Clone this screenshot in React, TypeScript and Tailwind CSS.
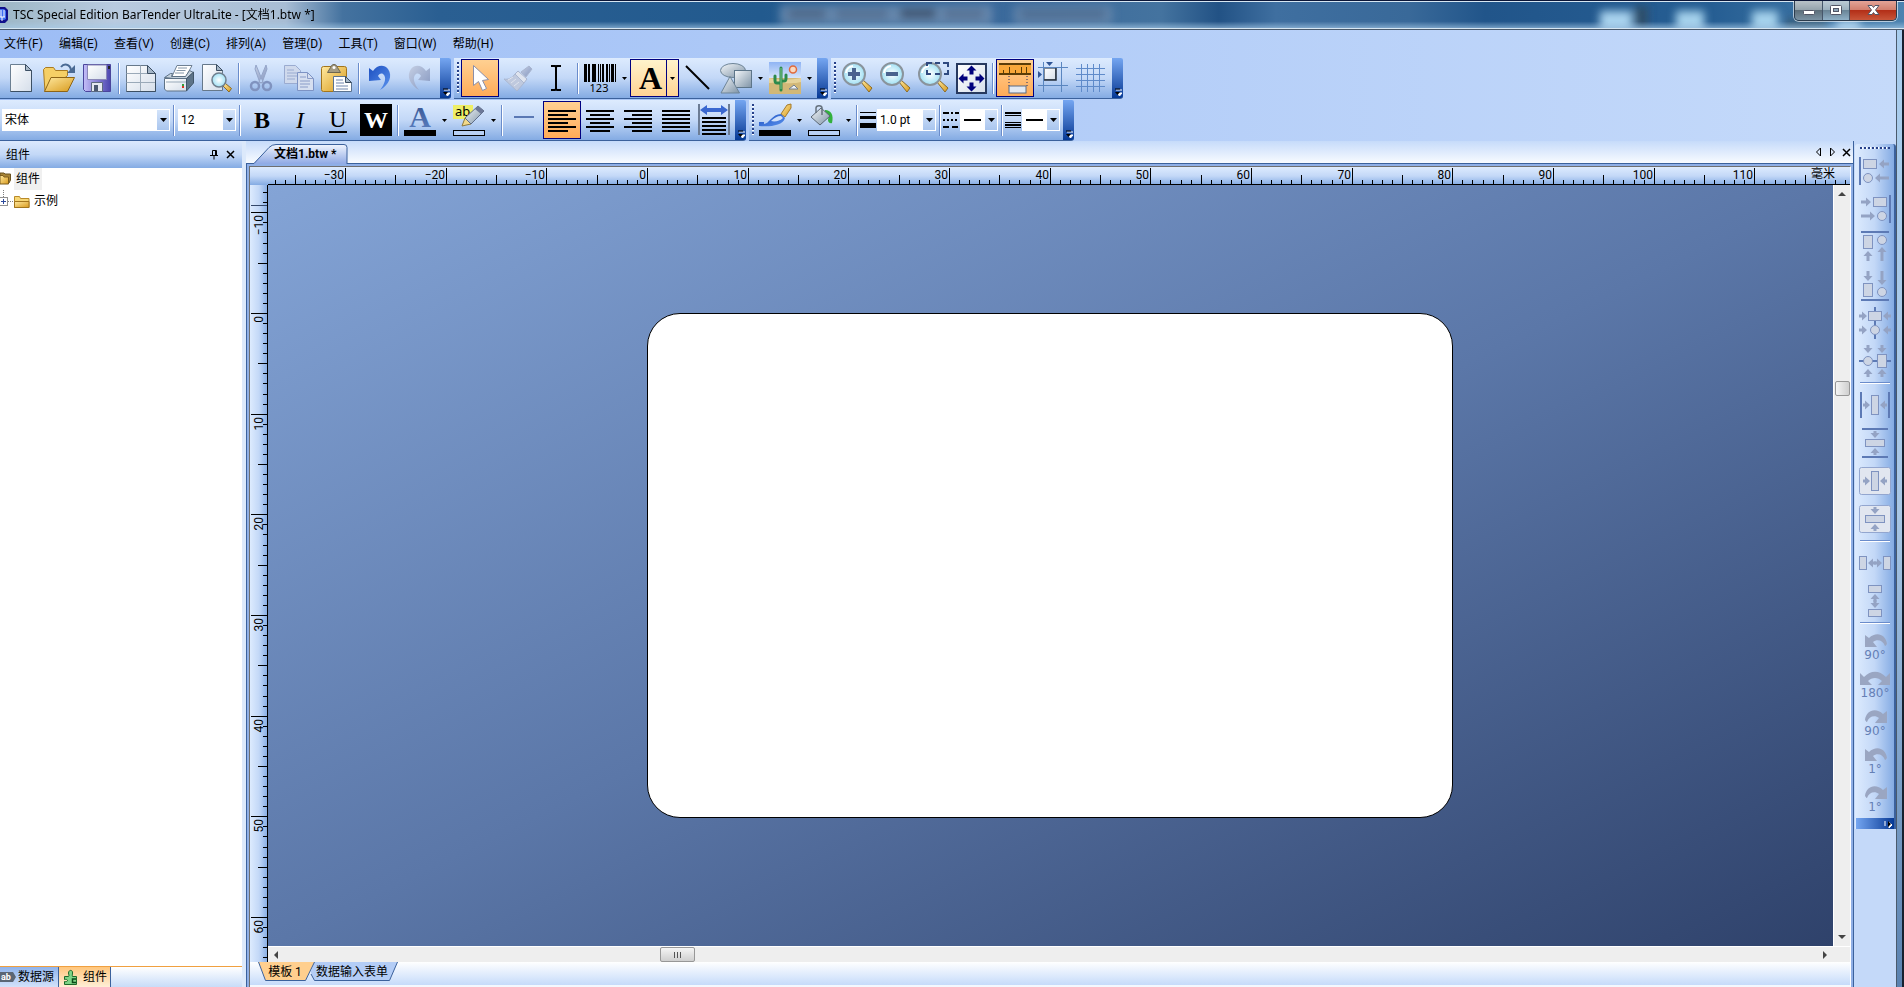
import React from "react";

const MM = 10.067;

const menuItems = [
  "文件(F)",
  "编辑(E)",
  "查看(V)",
  "创建(C)",
  "排列(A)",
  "管理(D)",
  "工具(T)",
  "窗口(W)",
  "帮助(H)",
];

/* ---------- shared pieces ---------- */

const Icon: React.FC<{ children: React.ReactNode }> = ({ children }) => (
  <svg
    className="block h-8 w-8 shrink-0 overflow-visible"
    viewBox="0 0 32 32"
    fill="none"
    aria-hidden="true"
  >
    {children}
  </svg>
);

const SharedGradients = () => (
  <svg className="absolute h-0 w-0" aria-hidden="true">
    <defs>
      <linearGradient id="page" x1="0" y1="0" x2="1" y2="1">
        <stop offset="0" stopColor="#ffffff" />
        <stop offset="1" stopColor="#d5deea" />
      </linearGradient>
      <linearGradient id="gold" x1="0" y1="0" x2="1" y2="1">
        <stop offset="0" stopColor="#ffe9a0" />
        <stop offset="1" stopColor="#d89a1c" />
      </linearGradient>
      <linearGradient id="violet" x1="0" y1="0" x2="1" y2="0">
        <stop offset="0" stopColor="#c3bdf8" />
        <stop offset="1" stopColor="#4b45b0" />
      </linearGradient>
      <linearGradient id="steel" x1="0" y1="0" x2="1" y2="1">
        <stop offset="0" stopColor="#f4f7fa" />
        <stop offset="1" stopColor="#7e93a6" />
      </linearGradient>
      <linearGradient id="blue" x1="0" y1="0" x2="1" y2="1">
        <stop offset="0" stopColor="#1c4fc0" />
        <stop offset="1" stopColor="#5b93ee" />
      </linearGradient>
      <linearGradient id="faded" x1="0" y1="0" x2="1" y2="1">
        <stop offset="0" stopColor="#c5cfe4" />
        <stop offset="1" stopColor="#8496bf" />
      </linearGradient>
      <linearGradient id="letter" x1="0" y1="0" x2="0" y2="1">
        <stop offset="0" stopColor="#33508c" />
        <stop offset="1" stopColor="#5d82c4" />
      </linearGradient>
      <radialGradient id="lens">
        <stop offset="0" stopColor="#ffffff" />
        <stop offset="1" stopColor="#9fe0f4" />
      </radialGradient>
      <linearGradient id="sky" x1="0" y1="0" x2="0" y2="1">
        <stop offset="0" stopColor="#8fb4f4" />
        <stop offset="1" stopColor="#dbe8fb" />
      </linearGradient>
    </defs>
  </svg>
);

const Caret = () => (
  <svg className="block h-1 w-[7px]" viewBox="0 0 7 4" aria-hidden="true">
    <path d="M0 0h7L3.5 4z" fill="#000" />
  </svg>
);

const Separator = () => (
  <div className="flex h-[31px] w-[6px] shrink-0 justify-center">
    <div className="w-[2px] border-l border-[#6a8ccb] bg-white" />
  </div>
);

const Grip = () => (
  <div className="flex h-8 w-[7px] shrink-0 justify-center">
    <div className="w-[2px] bg-[repeating-linear-gradient(180deg,#27418a_0px,#27418a_2px,#ffffff_2px,#ffffff_3px,transparent_3px,transparent_4px)]" />
  </div>
);

const ToolButton: React.FC<{
  label: string;
  active?: boolean;
  disabled?: boolean;
  children: React.ReactNode;
}> = ({ label, active, disabled, children }) => (
  <button
    type="button"
    aria-label={label}
    title={label}
    disabled={disabled}
    className={`flex h-[38px] w-[38px] shrink-0 items-center justify-center ${
      active
        ? "border border-[#000080] bg-linear-to-b from-[#ffd091] to-[#ffab57]"
        : ""
    }`}
  >
    {children}
  </button>
);

const SplitButton: React.FC<{
  label: string;
  hot?: boolean;
  children: React.ReactNode;
}> = ({ label, hot, children }) => (
  <div
    className={`flex h-[38px] w-[49px] shrink-0 ${
      hot
        ? "border border-[#000080] bg-linear-to-b from-[#fff3cb] to-[#ffd394]"
        : ""
    }`}
  >
    <button
      type="button"
      aria-label={label}
      title={label}
      className="flex flex-1 items-center justify-center"
    >
      {children}
    </button>
    <button
      type="button"
      aria-label={`${label} ▾`}
      className={`flex w-[12px] items-center justify-center ${
        hot ? "border-l border-[#000080]" : ""
      }`}
    >
      <svg className="block h-[3px] w-[5px]" viewBox="0 0 5 3">
        <path d="M0 0h5L2.5 3z" fill="#000" />
      </svg>
    </button>
  </div>
);

const Toolbar: React.FC<{ label: string; children: React.ReactNode }> = ({
  label,
  children,
}) => (
  <div
    role="toolbar"
    aria-label={label}
    className="flex h-[41px] shrink-0 rounded-r-[3px] border-b border-[#3b619c] bg-linear-to-b from-[#ddebfe] via-[#c3d8f7] to-[#84abe3]"
  >
    <div className="flex items-center pr-[2px]">{children}</div>
    <button
      type="button"
      aria-label="工具栏选项"
      className="flex w-[11px] items-end justify-center rounded-r-[2px] bg-linear-to-b from-[#75a6f1] to-[#053995] pb-[2px]"
    >
      <svg className="block h-[8px] w-[8px]" viewBox="0 0 8 8">
        <path d="M2 2h6M3 5h5L5.5 8z" stroke="#fff" fill="#fff" />
        <path d="M1 1h5" stroke="#000" />
        <path d="M1 4h5L3.5 7z" fill="#000" />
      </svg>
    </button>
  </div>
);

const ComboBox: React.FC<{
  label: string;
  value: string;
  width: string;
  line?: boolean;
}> = ({ label, value, width, line }) => (
  <div
    className={`relative mx-px flex h-[22px] shrink-0 border border-white bg-white ${width}`}
  >
    <select
      aria-label={label}
      defaultValue={value}
      className="min-w-0 flex-1 appearance-none bg-white pl-[2px] text-[12px] leading-[20px] text-black outline-none"
    >
      <option value={value}>{line ? "" : value}</option>
    </select>
    {line && (
      <span className="pointer-events-none absolute top-[9px] left-[3px] h-[2px] w-[17px] bg-black" />
    )}
    <span className="pointer-events-none flex w-[12px] items-center justify-center bg-linear-to-b from-[#d3e3fa] to-[#a9c5ee]">
      <Caret />
    </span>
  </div>
);

const Magnifier: React.FC<{ children?: React.ReactNode }> = ({ children }) => (
  <Icon>
    <path d="M20 20l2-2 9 8-3 4z" fill="url(#gold)" stroke="#8a6a26" />
    <circle cx="13" cy="12" r="11" fill="url(#lens)" stroke="#8a949c" strokeWidth="2" />
    <path d="M5 11a8 8 0 0 1 7-7" stroke="#fff" strokeWidth="2" />
    {children}
  </Icon>
);

/* ---------- title bar ---------- */

const TitleBar = () => (
  <header className="relative flex h-[30px] shrink-0 items-start justify-between overflow-hidden border-t border-[#0b1638] bg-[linear-gradient(90deg,#9db7c6_0%,#b9cbe0_6%,#a8bdd4_15%,#44729f_18%,#2a5f92_23%,#225a8e_40%,#3a699b_52%,#44739f_61%,#225285_64%,#3f6fa0_67%,#396999_74%,#21558a_78%,#265e93_90%,#4c83b0_100%)]">
    <svg className="absolute inset-0 h-full w-full" aria-hidden="true">
      <defs>
        <filter id="soft" x="-50%" y="-50%" width="200%" height="200%">
          <feGaussianBlur stdDeviation="4" />
        </filter>
        <linearGradient id="glow" x1="0" y1="0" x2="0" y2="1">
          <stop offset="0.7" stopColor="#a8cbe8" stopOpacity="0" />
          <stop offset="1" stopColor="#a8cbe8" stopOpacity="0.8" />
        </linearGradient>
      </defs>
      <g filter="url(#soft)">
        <rect x="780" y="4" width="212" height="20" fill="#7391b4" opacity="0.8" />
        <rect x="1014" y="5" width="98" height="18" fill="#7391b4" opacity="0.7" />
        <rect x="788" y="9" width="38" height="8" fill="#3c506e" opacity="0.7" />
        <rect x="836" y="9" width="52" height="8" fill="#3c506e" opacity="0.5" />
        <rect x="900" y="8" width="36" height="9" fill="#2c3c58" opacity="0.8" />
        <rect x="944" y="9" width="40" height="8" fill="#3c506e" opacity="0.5" />
        <rect x="1020" y="9" width="86" height="8" fill="#3c5a80" opacity="0.7" />
        <rect x="1600" y="10" width="32" height="20" fill="#a9d3ee" />
        <rect x="1634" y="5" width="14" height="22" fill="#34495a" opacity="0.7" />
        <rect x="1676" y="10" width="28" height="20" fill="#a5d2ec" />
        <rect x="1752" y="10" width="26" height="20" fill="#a5d2ec" />
        <rect x="1786" y="18" width="40" height="12" fill="#3d5766" opacity="0.7" />
        <rect x="1836" y="20" width="24" height="12" fill="#b5d8f2" />
      </g>
      <rect width="100%" height="100%" fill="url(#glow)" />
      <path d="M0 .5h3000M0 27.5h3000" stroke="#d6e6f2" />
      <path d="M0 28.5h3000" stroke="#4a5a6c" />
    </svg>
    <div className="relative flex items-center pt-1">
      <svg className="h-4 w-2" viewBox="0 0 8 16" aria-hidden="true">
        <path d="M0 0h5l3 3v10l-3 3H0z" fill="#10108c" />
        <path d="M0 2h4l2 2v8l-2 1H0z" fill="#3d6cf0" />
        <path d="M1 3v7M4 3v7M0 10h5M2 10v4" stroke="#fff" />
      </svg>
      <h1 className="pl-[5px] font-['Noto_Sans','Noto_Sans_CJK_SC',sans-serif] text-[12px] leading-5 whitespace-pre text-black">
        TSC Special Edition BarTender UltraLite - [文档1.btw *]
      </h1>
    </div>
    <div className="relative mr-[7px] flex h-5 overflow-hidden rounded-b-[5px] border border-t-0 border-[#2b3b4c] shadow-[0_0_0_1px_rgba(255,255,255,0.6)]">
      <button
        type="button"
        aria-label="最小化"
        className="flex w-[28px] items-center justify-center border-r border-[#46566a] bg-[linear-gradient(180deg,#b9c2c8_0%,#96a4ad_45%,#5c6e7a_50%,#7b92a3_100%)]"
      >
        <svg className="h-5 w-5" viewBox="0 0 20 20">
          <rect x="4.5" y="9.5" width="11" height="4" rx="1" fill="#fff" stroke="#535666" />
        </svg>
      </button>
      <button
        type="button"
        aria-label="最大化"
        className="flex w-[27px] items-center justify-center border-r border-[#46566a] bg-[linear-gradient(180deg,#bccad4_0%,#9db1bf_45%,#6a8597_50%,#8fb0c6_100%)]"
      >
        <svg className="h-5 w-5" viewBox="0 0 20 20">
          <rect x="4.5" y="4.5" width="11" height="9" rx="1" fill="#fff" stroke="#535666" />
          <rect x="7.5" y="7.5" width="5" height="3" fill="#8da5b8" stroke="#535666" />
        </svg>
      </button>
      <button
        type="button"
        aria-label="关闭"
        className="flex w-[46px] items-center justify-center bg-[linear-gradient(180deg,#e3a497_0%,#d3806f_45%,#b32f18_50%,#c8563a_100%)]"
      >
        <svg className="h-5 w-5" viewBox="0 0 20 20">
          <path
            d="M5 4.5h4l1.5 2 1.5-2h4l-3.5 4.5 3.5 4.5h-4l-1.5-2-1.5 2H5L8.5 9z"
            fill="#fff"
            stroke="#535666"
          />
        </svg>
      </button>
    </div>
  </header>
);

/* ---------- toolbars ---------- */

const StandardToolbar = () => (
  <Toolbar label="标准">
    <div className="w-[2px]" />
    <ToolButton label="新建">
      <Icon>
        <path d="M5.5 2.5h15l6 6v21h-21z" fill="url(#page)" stroke="#6b7f92" />
        <path d="M5.5 29.5h21v-21" stroke="#3c4f63" />
        <path d="M20.5 2.5v6h6z" fill="#a9b9c9" stroke="#3c4f63" />
      </Icon>
    </ToolButton>
    <ToolButton label="打开">
      <Icon>
        <path d="M.5 7.5l2-2h8l2 3h12v5l-18 16H2z" fill="#f5cf66" stroke="#a97b22" />
        <path d="M8 15.5h23.5l-7 14H1.5z" fill="url(#gold)" stroke="#8d6416" />
        <path d="M18 5c3-4 9-3 10 3" stroke="#4a6a94" strokeWidth="2" />
        <path d="M32 3v8h-8z" fill="#4a6a94" />
      </Icon>
    </ToolButton>
    <ToolButton label="保存">
      <Icon>
        <path d="M2.5 2.5h27v27h-25l-2-2z" fill="url(#violet)" stroke="#4a459c" />
        <path d="M6.5 3h19v14.5h-19z" fill="url(#page)" stroke="#8a88b8" />
        <path d="M10.5 20.5h11v9h-11z" fill="#e4e8ef" stroke="#5c6a80" />
        <path d="M13 23h4v6h-4z" fill="#4b5870" />
        <path d="M27 4h2v3h-2z" fill="#222" />
      </Icon>
    </ToolButton>
    <Separator />
    <ToolButton label="页面设置">
      <Icon>
        <path d="M1.5 3.5h21l8 8v18h-29z" fill="url(#page)" stroke="#66788a" />
        <path d="M1.5 11.5h21M1.5 20.5h29M15.5 3.5v26" stroke="#9aa9b8" />
        <path d="M1.5 29.5h29v-18" stroke="#3c4f63" />
        <path d="M22.5 3.5v8h8z" fill="#a5b6c7" stroke="#3c4f63" />
      </Icon>
    </ToolButton>
    <ToolButton label="打印">
      <Icon>
        <path d="M14 3.5h15l-6 11H9z" fill="#fff" stroke="#6e8093" />
        <path d="M15 6h9M13.5 8.5h9M12 11h9" stroke="#8496a8" />
        <path d="M1.5 15.5l6-4h2l-1 3h14l4-6 4 2-6 7.5z" fill="#c5d2de" stroke="#5e7286" />
        <path d="M1.5 16.5h22v12.5h-20l-2-2z" fill="url(#page)" stroke="#5e7286" />
        <path d="M23.5 16.5l7-6.5v11l-7 8z" fill="#5d7388" stroke="#41566a" />
        <path d="M3 20h20" stroke="#97a8b8" />
        <path d="M19 22h2v2h-2z" fill="#2f9d3a" />
        <path d="M19 24h2v2h-2z" fill="#d83222" />
      </Icon>
    </ToolButton>
    <ToolButton label="打印预览">
      <Icon>
        <path d="M1.5 2.5h14l6 6v20h-20z" fill="url(#page)" stroke="#66788a" />
        <path d="M15.5 2.5v6h6z" fill="#a5b6c7" stroke="#3c4f63" />
        <path d="M22 24l2.5-2.5 6 5-2.5 3.5z" fill="url(#gold)" stroke="#8a6a26" />
        <circle cx="18" cy="18" r="7" fill="url(#lens)" stroke="#6f7f8e" strokeWidth="1.5" />
      </Icon>
    </ToolButton>
    <Separator />
    <ToolButton label="剪切" disabled>
      <Icon>
        <path d="M11 3l7 17-3 1-5-14zM21 3l-7 17 3 1 5-14z" fill="url(#faded)" stroke="#94a5c9" />
        <circle cx="10" cy="24" r="4" stroke="#8093bf" strokeWidth="2.5" />
        <circle cx="22" cy="24" r="4" stroke="#8093bf" strokeWidth="2.5" />
      </Icon>
    </ToolButton>
    <ToolButton label="复制" disabled>
      <Icon>
        <path d="M1.5 3.5h11l5 5v13h-16z" fill="#cfd9ec" stroke="#9aabd0" />
        <path d="M4 8h7M4 11h10M4 14h10M4 17h8" stroke="#9aabd0" />
        <path d="M14.5 10.5h10l6 6v12h-16z" fill="#d6dff0" stroke="#7d93c4" />
        <path d="M24.5 10.5v6h6M17 15h6M17 19h10M17 22h10M17 25h8" stroke="#8a9cc8" />
      </Icon>
    </ToolButton>
    <ToolButton label="粘贴">
      <Icon>
        <rect x=".5" y="4.5" width="25" height="25" rx="2" fill="url(#gold)" stroke="#a2751c" />
        <path d="M6.5 10.5l3-5c1-4 6-4 7 0l3 5z" fill="#a59c82" stroke="#6d6650" />
        <circle cx="13" cy="5.5" r="1.5" fill="#fff" />
        <path d="M12.5 14.5h12l6 6v9h-18z" fill="#fff" stroke="#5b7390" />
        <path d="M24.5 14.5v6h6z" fill="#a5b6c7" stroke="#3c4f63" />
        <path d="M15 18h7M15 21h8M15 24h12M15 27h12" stroke="#7187ae" />
      </Icon>
    </ToolButton>
    <Separator />
    <ToolButton label="撤消">
      <Icon>
        <path
          d="M4 6l4 3c4-6 11-7 15-2 5 7 1 16-8 21 5-6 7-13 3-16-2-1-4 0-5 2l3 4-12 1z"
          fill="url(#blue)"
        />
      </Icon>
    </ToolButton>
    <ToolButton label="恢复" disabled>
      <Icon>
        <path
          d="M27 6l-4 3c-4-6-11-7-15-2-5 7-1 16 8 21-5-6-7-13-3-16 2-1 4 0 5 2l-3 4 12 1z"
          fill="url(#faded)"
        />
      </Icon>
    </ToolButton>
  </Toolbar>
);

const ObjectToolbar = () => (
  <Toolbar label="对象">
    <Grip />
    <ToolButton label="选择" active>
      <Icon>
        <path
          d="M9.5 3.5v20l5-4 4 9 4-2-4-8 6-1z"
          fill="#fff"
          stroke="#8c8fa8"
        />
      </Icon>
    </ToolButton>
    <ToolButton label="格式刷" disabled>
      <Icon>
        <path d="M27 4l3 3-6 8-5-5z" fill="url(#faded)" stroke="#a9b5cf" />
        <path d="M16 9l9 8-3 4-9-9z" fill="#dfe4ee" stroke="#a9b5cf" />
        <path d="M13 12l9 9-7 8L2 17c4 1 8-1 11-5z" fill="#bfc9de" stroke="#aab7d0" />
        <path d="M6 18l5-3M9 21l5-4M12 24l5-4" stroke="#dfe4ee" />
      </Icon>
    </ToolButton>
    <ToolButton label="文本光标">
      <Icon>
        <path d="M11 4h4l1 1 1-1h4M11 28h4l1-1 1 1h4M16 5v22" stroke="#000" strokeWidth="2" />
      </Icon>
    </ToolButton>
    <Separator />
    <SplitButton label="条形码">
      <Icon>
        <path
          d="M0 2h3v18H0zM4 2h2v18H4zM8 2h4v18H8zM14 2h1v18h-1zM16 2h1v18h-1zM18 2h2v18h-2zM22 2h2v18h-2zM25 2h1v18h-1zM27 2h3v18h-3zM31 2h1v18h-1z"
          fill="#000"
        />
        <text
          x="15"
          y="30"
          textAnchor="middle"
          fontSize="11"
          fill="#000"
          className="font-['Noto_Sans',sans-serif]"
        >
          123
        </text>
      </Icon>
    </SplitButton>
    <SplitButton label="文本" hot>
      <span className="pl-1 font-['Liberation_Serif',serif] text-[32px] leading-8 font-bold">
        A
      </span>
    </SplitButton>
    <ToolButton label="线条">
      <Icon>
        <path d="M4 4l23 23" stroke="#000" strokeWidth="2" />
      </Icon>
    </ToolButton>
    <SplitButton label="形状">
      <Icon>
        <ellipse cx="13" cy="8.5" rx="12.5" ry="7" fill="url(#steel)" stroke="#6d8497" />
        <rect x="14.5" y="8.5" width="17" height="17" fill="url(#steel)" stroke="#5d7589" />
        <path d="M10 14.5L19.5 31H1z" fill="url(#steel)" stroke="#6d8497" />
      </Icon>
    </SplitButton>
    <SplitButton label="图片">
      <Icon>
        <path d="M0 0h32v17H0z" fill="url(#sky)" />
        <path d="M0 16h32v16H0z" fill="#d2b877" />
        <path d="M0 16c10 2 22 2 32 0v4c-12 3-20-1-32 1z" fill="#e6d39a" />
        <circle cx="24" cy="7.5" r="3.5" fill="#f8d8c0" stroke="#e06a3c" strokeWidth="1.5" />
        <path
          d="M12 28V6M12 21H8c-2 0-2-1-2-3v-4M12 19h3c2 0 2-1 2-3v-3"
          stroke="#2c8a4c"
          strokeWidth="3"
          strokeLinecap="round"
        />
        <path d="M12 27V6" stroke="#7cc58c" />
        <path d="M20 27l5-4 4 4z" fill="#eef2f6" stroke="#74808c" />
      </Icon>
    </SplitButton>
  </Toolbar>
);

const ViewToolbar = () => (
  <Toolbar label="视图">
    <Grip />
    <ToolButton label="放大">
      <Magnifier>
        <path d="M7 12h12M13 6v12" stroke="#4a638e" strokeWidth="4" />
      </Magnifier>
    </ToolButton>
    <ToolButton label="缩小">
      <Magnifier>
        <path d="M7 12h12" stroke="#4a638e" strokeWidth="4" />
      </Magnifier>
    </ToolButton>
    <ToolButton label="缩放到选定内容">
      <Magnifier>
        <path
          d="M10 4V1h5M18 1h5M26 1h5v4M31 8v4h-4M23 12h-5M14 12h-4V8"
          stroke="#2f4a80"
          strokeWidth="2"
        />
      </Magnifier>
    </ToolButton>
    <ToolButton label="适合窗口">
      <Icon>
        <rect x="2" y="2" width="29" height="29" fill="url(#page)" stroke="#27395f" strokeWidth="2" />
        <path
          d="M16.5 3.500l5 5h-3v4h-4v-4h-3zM16.5 29.5l5-5h-3v-4h-4v4h-3zM3.5 16.500l5-5v3h4v4h-4v3zM29.500 16.500l-5-5v3h-4v4h4v3z"
          fill="#00007c"
        />
      </Icon>
    </ToolButton>
    <Separator />
    <ToolButton label="标尺" active>
      <Icon>
        <path d="M0 1h32v12H0z" fill="#f9a83a" />
        <path d="M0 2h32M0 12h32" stroke="#5b3d08" strokeWidth="2" />
        <path d="M4.5 8v3M10.5 5v6M16.5 8v3M22.5 5v6M27.5 5v6" stroke="#5b3d08" />
        <path d="M10 14v10M28 14v10" stroke="#1a2a6a" strokeDasharray="1 2" />
        <rect x="10" y="24" width="17" height="7" fill="#e3e9f2" stroke="#5a6b84" />
      </Icon>
    </ToolButton>
    <ToolButton label="对齐网格">
      <Icon>
        <path d="M1 5.5h30M1 23.5h30M6.5 0v30M24.5 0v30" stroke="#5a86c0" />
        <rect x="7.5" y="6.5" width="11" height="11" fill="url(#page)" stroke="#7d8896" />
        <path d="M7 18h12V6" stroke="#222c3a" strokeWidth="1.5" />
        <path d="M9 0h7l-3.5 4zM1 9v7l4-3.5z" fill="#2f5596" />
      </Icon>
    </ToolButton>
    <ToolButton label="网格">
      <Icon>
        <path
          d="M1 6.5h29M1 12.5h29M1 18.5h29M1 24.5h29M6.5 2v28M12.5 2v28M18.5 2v28M24.5 2v28"
          stroke="#5f8bca"
        />
      </Icon>
    </ToolButton>
  </Toolbar>
);

const lineSets: Record<string, string> = {
  left: "M2 7h28M2 11h20M2 15h28M2 19h20M2 23h28M2 27h20",
  center: "M2 7h28M6 11h20M2 15h28M6 19h20M2 23h28M6 27h20",
  right: "M2 7h28M10 11h20M2 15h28M10 19h20M2 23h28M10 27h20",
  justify: "M2 7h28M2 11h28M2 15h28M2 19h28M2 23h28M2 27h28",
};

const AlignIcon: React.FC<{ kind: string }> = ({ kind }) => (
  <Icon>
    <path d={lineSets[kind]} stroke="#000" strokeWidth="2" />
  </Icon>
);

const TextToolbar = () => (
  <Toolbar label="文本格式">
    <div className="w-px" />
    <ComboBox label="字体" value="宋体" width="w-[168px]" />
    <Separator />
    <ComboBox label="字号" value="12" width="w-[58px]" />
    <Separator />
    <ToolButton label="粗体">
      <span className="font-['Liberation_Serif',serif] text-[24px] leading-8 font-bold">B</span>
    </ToolButton>
    <ToolButton label="斜体">
      <span className="font-['Liberation_Serif',serif] text-[24px] leading-8 italic">I</span>
    </ToolButton>
    <ToolButton label="下划线">
      <span className="border-b-2 border-black font-['Liberation_Serif',serif] text-[24px] leading-6">
        U
      </span>
    </ToolButton>
    <ToolButton label="反白">
      <span className="flex h-8 w-8 items-center justify-center bg-black font-['Liberation_Serif',serif] text-[24px] leading-8 font-bold text-white">
        W
      </span>
    </ToolButton>
    <Separator />
    <SplitButton label="文本颜色">
      <Icon>
        <text
          x="16"
          y="23"
          textAnchor="middle"
          fontSize="30"
          fontWeight="700"
          fill="url(#letter)"
          className="font-['Liberation_Serif',serif]"
        >
          A
        </text>
        <path d="M0 26h32v6H0z" fill="#000" />
      </Icon>
    </SplitButton>
    <SplitButton label="背景色">
      <Icon>
        <path d="M0 1h20v14H0z" fill="#eeee66" />
        <text
          x="2"
          y="12"
          fontSize="13"
          fill="#000"
          className="font-['Noto_Sans',sans-serif]"
        >
          ab
        </text>
        <path d="M9 22l3-8 6 6z" fill="#f2d98a" stroke="#8e7a3c" />
        <path d="M12 14L25 2l6 5-13 13z" fill="url(#steel)" stroke="#5f6d88" />
        <path d="M25 2l6 5-3 3-6-5z" fill="#6c7898" />
        <rect x=".5" y="26.5" width="31" height="5" fill="#b8d0f4" stroke="#000" />
      </Icon>
    </SplitButton>
    <Separator />
    <ToolButton label="项目">
      <Icon>
        <path d="M6 13h20" stroke="#5a78b4" strokeWidth="2" />
      </Icon>
    </ToolButton>
    <ToolButton label="左对齐" active>
      <AlignIcon kind="left" />
    </ToolButton>
    <ToolButton label="居中">
      <AlignIcon kind="center" />
    </ToolButton>
    <ToolButton label="右对齐">
      <AlignIcon kind="right" />
    </ToolButton>
    <ToolButton label="两端对齐">
      <AlignIcon kind="justify" />
    </ToolButton>
    <ToolButton label="调整宽度">
      <Icon>
        <path d="M1 0v31M31 0v31" stroke="#6c7c94" strokeWidth="2" />
        <path d="M2 6l7-5v3h14V1l7 5-7 5V8H9v3z" fill="#3a68d0" />
        <path d="M4 14h24M4 18h24M4 22h24M4 26h24M4 30h24" stroke="#000" strokeWidth="2" />
      </Icon>
    </ToolButton>
  </Toolbar>
);

const LineToolbar = () => (
  <Toolbar label="线条与填充">
    <Grip />
    <SplitButton label="线条颜色">
      <Icon>
        <path d="M22 10l6-9 4-1v4l-6 9z" fill="url(#gold)" stroke="#a57a2a" />
        <path d="M0 18h5v2c5 0 8-10 17-10l4 4c-2 8-16 9-26 8z" fill="url(#blue)" />
        <path d="M12 17c3-3 6-5 10-5l2 2c-3 3-8 4-12 3z" fill="#cfe0fb" />
        <path d="M0 26h32v6H0z" fill="#000" />
      </Icon>
    </SplitButton>
    <SplitButton label="填充颜色">
      <Icon>
        <path d="M17 6c6 0 9 5 7 13-2 1-4-1-4-3 1-4 0-6-3-8z" fill="#32b03c" />
        <path d="M13 4l9 8-10 9-9-8z" fill="url(#steel)" stroke="#5a6774" />
        <path d="M8 9V4c0-3 6-3 6 0v7" stroke="#66727e" strokeWidth="1.5" />
        <rect x=".5" y="26.5" width="31" height="5" fill="#b8d0f4" stroke="#000" />
      </Icon>
    </SplitButton>
    <Separator />
    <svg className="block h-8 w-4" viewBox="0 0 16 32" aria-hidden="true">
      <path d="M0 8h16v1H0zM0 12h16v3H0zM0 19h16v5H0z" fill="#000" />
    </svg>
    <ComboBox label="线条粗细" value="1.0 pt" width="w-[59px]" />
    <Separator />
    <svg className="block h-8 w-4" viewBox="0 0 16 32" aria-hidden="true">
      <path d="M0 9h6M8 9h2M12 9h4M0 23h6M9 23h6" stroke="#000" strokeWidth="2" />
      <path d="M0 16h16" stroke="#000" strokeWidth="2" strokeDasharray="2 2" />
    </svg>
    <ComboBox label="虚线样式" value="solid" width="w-[38px]" line />
    <Separator />
    <svg className="block h-8 w-4" viewBox="0 0 16 32" aria-hidden="true">
      <path d="M0 8h16v2H0zM0 11h16v1H0zM0 18h16v1H0zM0 20h16v2H0zM0 23h16v1H0z" fill="#000" />
    </svg>
    <ComboBox label="复合线型" value="single" width="w-[38px]" line />
  </Toolbar>
);

/* ---------- left panel ---------- */

const ComponentPanel = () => (
  <aside className="flex w-[242px] shrink-0 flex-col bg-white">
    <div className="flex h-[27px] shrink-0 items-center bg-linear-to-b from-[#dce9fd] via-[#c3d8f7] to-[#84abe3] pr-[6px] pl-[6px]">
      <h2 className="flex-1 text-[12px] leading-4 text-black">组件</h2>
      <button type="button" aria-label="自动隐藏" className="mr-[5px]">
        <svg className="h-[11px] w-[11px]" viewBox="0 0 11 11">
          <path d="M3.5 6V1.5h4V6M6.5 1v5M1 6.5h8M5 7v3.5" stroke="#000" fill="none" />
        </svg>
      </button>
      <button type="button" aria-label="关闭面板">
        <svg className="h-[11px] w-[11px]" viewBox="0 0 11 11">
          <path d="M2 2l7 7M9 2l-7 7" stroke="#000" strokeWidth="1.5" />
        </svg>
      </button>
    </div>
    <ul className="flex-1 text-[12px] leading-[22px] text-black">
      <li>
        <div className="flex h-[22px] items-center">
          <svg className="h-4 w-[14px]" viewBox="0 0 14 16" aria-hidden="true">
            <path d="M0 2h4l1 1h5.5v6l-1.5 3H0z" fill="#a78436" stroke="#6b5320" />
            <path d="M0 4.5h3l1 1.5h4.5v7H0z" fill="url(#gold)" stroke="#7d5c1c" />
          </svg>
          <span className="bg-[#f0f0f0] px-[2px]">组件</span>
        </div>
        <ul>
          <li className="flex h-[22px] items-center">
            <svg className="h-[22px] w-[14px]" viewBox="0 0 14 22" aria-hidden="true">
              <path d="M3.5 0v7M8 11.5h6" stroke="#808080" strokeDasharray="1 1" />
              <rect x="-.5" y="7.5" width="8" height="8" fill="#fff" stroke="#919191" />
              <path d="M1 11.5h5M3.5 9v5" stroke="#2c4a9c" />
            </svg>
            <svg className="h-4 w-4" viewBox="0 0 16 16" aria-hidden="true">
              <path d="M.5 3.5h5l1 2h8.5v9H.5z" fill="#f7d774" stroke="#b98a2a" />
              <path d="M.5 14.5v-6h14.5v6z" fill="url(#gold)" stroke="#a2751c" />
            </svg>
            <span className="pl-1">示例</span>
          </li>
        </ul>
      </li>
    </ul>
    <div
      role="tablist"
      className="flex h-[21px] shrink-0 border-t border-[#f0a040] bg-linear-to-b from-white to-[#c8dcf8] text-[12px] leading-4 text-black"
    >
      <button
        type="button"
        role="tab"
        aria-selected="false"
        className="flex w-[59px] items-center gap-[2px] border-r border-[#3b619c] bg-linear-to-b from-[#8fb3ec] to-[#d3e2fa]"
      >
        <svg className="h-4 w-4" viewBox="0 0 16 16" aria-hidden="true">
          <path d="M0 3h13l3 5-3 5H0z" fill="#5b6675" />
          <text x="1" y="11" fontSize="9" fontWeight="700" fill="#fff">
            ab
          </text>
        </svg>
        数据源
      </button>
      <button
        type="button"
        role="tab"
        aria-selected="true"
        className="flex w-[52px] items-center gap-1 border-r border-[#3b619c] bg-linear-to-b from-[#ffc67c] to-[#ffeed6] pl-1"
      >
        <svg className="h-4 w-4" viewBox="0 0 16 16" aria-hidden="true">
          <path
            d="M1.5 7.5h4c1-1 0-2 0-3.5C5.500.5 10 .5 9.500 4c0 1.500-.5 2.500 0 3.500h4v8h-12v-3c4 1 4-3 0-2z"
            fill="#7fd487"
            stroke="#1d6a2a"
          />
          <path d="M13 10H9.500v3.500H13" stroke="#0c4a18" fill="none" strokeWidth="1.5" />
        </svg>
        组件
      </button>
    </div>
  </aside>
);

/* ---------- document ---------- */

const range = (from: number, to: number) =>
  Array.from({ length: to - from + 1 }, (_, i) => from + i);

const HorizontalRuler = () => (
  <div className="relative h-[18px] shrink-0 bg-linear-to-b from-[#ddebfe] via-[#c3d8f7] to-[#84abe3]">
    <svg className="block h-full w-full" aria-hidden="true">
      {range(-37, 119).map((mm) => {
        const x = Math.round(397 + mm * MM);
        const major = mm % 10 === 0;
        const top = major ? 1 : mm % 5 === 0 ? 8 : 13;
        return (
          <g key={mm}>
            <path d={`M${x}.5 ${top}v${17 - top}`} stroke="#000" />
            {major && (
              <text x={x - 1} y="12" textAnchor="end" fontSize="12">
                {mm < 0 ? `−${-mm}` : mm}
              </text>
            )}
          </g>
        );
      })}
      <path d="M18 17.5h1583" stroke="#000" />
    </svg>
    <span className="absolute top-0 right-[15px] text-[12px] leading-[15px] text-black">
      毫米
    </span>
  </div>
);

const VerticalRuler = () => (
  <div className="w-[18px] shrink-0 bg-linear-to-r from-[#ddebfe] via-[#c3d8f7] to-[#84abe3]">
    <svg className="block h-full w-full" aria-hidden="true">
      <path d="M1 20.5h16" stroke="#33476a" />
      {range(-12, 64).map((mm) => {
        const y = Math.round(128 + mm * MM);
        const major = mm % 10 === 0;
        const left = major ? 1 : mm % 5 === 0 ? 8 : 13;
        return (
          <g key={mm}>
            <path d={`M${left} ${y}.5H17`} stroke="#000" />
            {major && (
              <text
                transform={`translate(13 ${y + 3}) rotate(-90)`}
                textAnchor="end"
                fontSize="12"
              >
                {mm < 0 ? `−${-mm}` : mm}
              </text>
            )}
          </g>
        );
      })}
      <path d="M17.5 0v2000" stroke="#000" />
    </svg>
  </div>
);

const VerticalScroll = () => (
  <div className="flex w-[17px] shrink-0 flex-col items-center border-l border-white bg-[#eeeeee] py-[6px]">
    <svg className="h-[6px] w-[8px]" viewBox="0 0 8 6" aria-hidden="true">
      <path d="M0 5h8L4 1z" fill="#444" />
    </svg>
    <div className="flex-[184]" />
    <button
      type="button"
      aria-label="垂直滚动"
      className="h-[15px] w-[15px] rounded-[2px] border border-[#979797] bg-linear-to-r from-[#f5f5f5] to-[#cfcfcf]"
    />
    <div className="flex-[538]" />
    <svg className="h-[6px] w-[8px]" viewBox="0 0 8 6" aria-hidden="true">
      <path d="M0 1h8L4 5z" fill="#444" />
    </svg>
  </div>
);

const HorizontalScroll = () => (
  <div className="flex h-4 shrink-0 items-center border-t border-white bg-[#eeeeee] pr-[22px] pl-[5px]">
    <svg className="h-2 w-[6px]" viewBox="0 0 6 8" aria-hidden="true">
      <path d="M5 0v8L1 4z" fill="#444" />
    </svg>
    <div className="flex-[381]" />
    <button
      type="button"
      aria-label="水平滚动"
      className="flex h-[15px] w-[35px] items-center justify-center gap-[2px] rounded-[2px] border border-[#979797] bg-linear-to-b from-[#f5f5f5] to-[#cfcfcf]"
    >
      <span className="h-[6px] w-px bg-[#555]" />
      <span className="h-[6px] w-px bg-[#555]" />
      <span className="h-[6px] w-px bg-[#555]" />
    </button>
    <div className="flex-[1127]" />
    <svg className="h-2 w-[6px]" viewBox="0 0 6 8" aria-hidden="true">
      <path d="M1 0v8l4-4z" fill="#444" />
    </svg>
  </div>
);

const DocumentArea = () => (
  <main className="flex min-w-0 flex-1 flex-col bg-[#dce9fb] pl-1">
    <div className="flex h-[22px] shrink-0 items-end justify-between bg-linear-to-b from-[#c6dbfa] to-[#f8fbff]">
      <button
        type="button"
        className="relative z-10 -mb-px ml-[7px] flex h-5 w-[96px] items-center pl-[21px] text-[12px] leading-4 font-bold text-black"
      >
        <svg className="absolute inset-0 h-full w-full" viewBox="0 0 96 20" aria-hidden="true">
          <defs>
            <linearGradient id="doctab" x1="0" y1="0" x2="0" y2="1">
              <stop offset="0" stopColor="#f0f5fe" />
              <stop offset="1" stopColor="#8fa9e4" />
            </linearGradient>
          </defs>
          <path d="M0 20L16 3.5Q19 .5 23 .5h68q3 0 3 3V20z" fill="url(#doctab)" />
          <path d="M0 19.5h1L16 3.5Q19 .5 23 .5h68q3 0 3 3V20" fill="none" stroke="#3b619c" />
        </svg>
        <span className="relative whitespace-nowrap">文档1.btw *</span>
      </button>
      <div className="flex gap-[5px] self-center pr-[2px]">
        <button type="button" aria-label="上一个">
          <svg className="h-[10px] w-[9px]" viewBox="0 0 9 10">
            <path d="M6.5 1v8l-4-4z" fill="none" stroke="#000" />
          </svg>
        </button>
        <button type="button" aria-label="下一个">
          <svg className="h-[10px] w-[9px]" viewBox="0 0 9 10">
            <path d="M2.5 1v8l4-4z" fill="none" stroke="#000" />
          </svg>
        </button>
        <button type="button" aria-label="关闭文档">
          <svg className="h-[10px] w-[9px]" viewBox="0 0 9 10">
            <path d="M1 2l7 7M8 2L1 9" stroke="#000" strokeWidth="1.5" />
          </svg>
        </button>
      </div>
    </div>
    <div className="flex min-h-0 flex-1 flex-col border-t border-l border-[#3b619c] bg-[#8fafe6] pt-[2px] pr-[2px] pl-[2px]">
      <div className="flex min-h-0 flex-1 flex-col border-t border-l border-r border-[#6f6f6f] border-r-white">
        <HorizontalRuler />
        <div className="flex min-h-0 flex-1">
          <VerticalRuler />
          <div className="flex min-w-0 flex-1 flex-col">
            <div className="flex min-h-0 flex-1">
              <div className="flex min-w-0 flex-1 items-center justify-center bg-linear-to-br from-[#84a4d6] via-[#5b77a8] to-[#2f426b] pr-[2px]">
                <div className="h-[505px] w-[806px] rounded-[33px] border border-black bg-white" />
              </div>
              <VerticalScroll />
            </div>
            <HorizontalScroll />
          </div>
        </div>
        <div className="h-[25px] shrink-0 border-b-2 border-[#f4f8fe] bg-linear-to-b from-white to-[#c6dbfa] pl-2">
          <div role="tablist" className="flex text-[12px] leading-4 text-black">
            <button
              type="button"
              role="tab"
              aria-selected="true"
              className="relative z-10 h-[19px] w-[58px] pr-1"
            >
              <svg className="absolute inset-0 h-full w-full" viewBox="0 0 58 19" aria-hidden="true">
                <path d="M.5 0l7 18.5h40l9-18.5z" fill="#ffcf8e" />
                <path d="M.5 0l7 18.5h40l9-18.5" fill="none" stroke="#3b619c" />
              </svg>
              <span className="relative">模板 1</span>
            </button>
            <button
              type="button"
              role="tab"
              aria-selected="false"
              className="relative -ml-[6px] h-[19px] w-[88px] pr-1"
            >
              <svg className="absolute inset-0 h-full w-full" viewBox="0 0 88 19" aria-hidden="true">
                <path d="M4.5 0l-4 10 4 8.5h75l8-18.5z" fill="#b4cdf6" />
                <path d="M1 12l3.5 6.5h75l8-18.5" fill="none" stroke="#3b619c" />
              </svg>
              <span className="relative whitespace-nowrap">数据输入表单</span>
            </button>
          </div>
        </div>
      </div>
    </div>
  </main>
);

/* ---------- arrange toolbar ---------- */

const LINE = "#5d7ab5";
const SHAPE = { fill: "#cdd5e4", stroke: "#7f93c0", strokeWidth: 1 };

const Arrow: React.FC<{
  x: number;
  y: number;
  turn: number;
  length?: number;
}> = ({ x, y, turn, length = 8 }) => (
  <path
    transform={`translate(${x} ${y}) rotate(${turn})`}
    d={`M0 0L-5 -4.5V-1.5H-${length}V1.5H-5V4.5Z`}
    fill="#94a3c4"
  />
);

const RotateIcon: React.FC<{ text: string; kind: "left" | "right" | "both" }> = ({
  text,
  kind,
}) => (
  <Icon>
    {kind === "left" && (
      <path d="M6 6l4 3c7-7 17-4 18 6-2 2-1 2-2 2-2-6-8-7-12-4l4 5H6z" fill="#9aa6c2" />
    )}
    {kind === "right" && (
      <path d="M28 6l-4 3C17 2 7 5 6 15c2 2 1 2 2 2 2-6 8-7 12-4l-4 5h12z" fill="#9aa6c2" />
    )}
    {kind === "both" && (
      <path
        d="M1 6l4 4c7-7 15-7 22 0l4-4v12H19l4-4c-4-4-10-4-14 0l4 4H1z"
        fill="#9aa6c2"
      />
    )}
    <text
      x="16"
      y="30"
      textAnchor="middle"
      fontSize="12"
      fill="#6580b6"
      className="font-['DejaVu_Sans',sans-serif]"
    >
      {text}
    </text>
  </Icon>
);

const SideSeparator = () => (
  <div className="flex h-[6px] shrink-0 flex-col justify-center">
    <div className="mx-1 h-[2px] border-t border-[#6a8ccb] bg-white" />
  </div>
);

const ArrangeToolbar = () => (
  <aside className="w-[43px] shrink-0 border-l border-[#3b619c] bg-[#c4d9f9] pt-[3px] pl-px">
    <div
      role="toolbar"
      aria-label="排列"
      aria-orientation="vertical"
      className="flex flex-col rounded-t-[3px] border-r-2 border-[#3b619c] bg-linear-to-r from-[#ddebfe] via-[#c3d8f7] to-[#84abe3] pl-px"
    >
      <div className="flex h-2 shrink-0 items-center px-1">
        <div className="h-[2px] w-full bg-[repeating-linear-gradient(90deg,#27418a_0px,#27418a_2px,#ffffff_2px,#ffffff_3px,transparent_3px,transparent_4px)]" />
      </div>
      <ToolButton label="左对齐" disabled>
        <Icon>
          <path d="M1 2v28" stroke={LINE} strokeWidth="2" />
          <rect x="4.5" y="4.5" width="13" height="9" {...SHAPE} />
          <circle cx="9" cy="23" r="4.5" {...SHAPE} />
          <Arrow x={20} y={9} turn={180} length={10} />
          <Arrow x={16} y={23} turn={180} length={14} />
        </Icon>
      </ToolButton>
      <ToolButton label="右对齐" disabled>
        <Icon>
          <path d="M31 2v28" stroke={LINE} strokeWidth="2" />
          <rect x="14.5" y="4.5" width="13" height="9" {...SHAPE} />
          <circle cx="23" cy="23" r="4.5" {...SHAPE} />
          <Arrow x={12} y={9} turn={0} length={10} />
          <Arrow x={16} y={23} turn={0} length={14} />
        </Icon>
      </ToolButton>
      <ToolButton label="顶端对齐" disabled>
        <Icon>
          <path d="M2 1h28" stroke={LINE} strokeWidth="2" />
          <rect x="4.5" y="4.5" width="9" height="13" {...SHAPE} />
          <circle cx="23" cy="9" r="4.5" {...SHAPE} />
          <Arrow x={9} y={20} turn={-90} length={10} />
          <Arrow x={23} y={16} turn={-90} length={14} />
        </Icon>
      </ToolButton>
      <ToolButton label="底端对齐" disabled>
        <Icon>
          <path d="M2 31h28" stroke={LINE} strokeWidth="2" />
          <rect x="4.5" y="14.5" width="9" height="13" {...SHAPE} />
          <circle cx="23" cy="23" r="4.5" {...SHAPE} />
          <Arrow x={9} y={12} turn={90} length={10} />
          <Arrow x={23} y={16} turn={90} length={14} />
        </Icon>
      </ToolButton>
      <ToolButton label="水平居中" disabled>
        <Icon>
          <path d="M16 0v32" stroke={LINE} strokeWidth="2" />
          <rect x="9.5" y="4.5" width="13" height="9" {...SHAPE} />
          <circle cx="16" cy="23" r="4.5" {...SHAPE} />
          <Arrow x={8} y={9} turn={0} />
          <Arrow x={8} y={23} turn={0} />
          <Arrow x={24} y={9} turn={180} />
          <Arrow x={24} y={23} turn={180} />
        </Icon>
      </ToolButton>
      <ToolButton label="垂直居中" disabled>
        <Icon>
          <path d="M0 16h32" stroke={LINE} strokeWidth="2" />
          <circle cx="9" cy="16" r="4.5" {...SHAPE} />
          <rect x="18.5" y="9.5" width="9" height="13" {...SHAPE} />
          <Arrow x={9} y={8} turn={90} />
          <Arrow x={23} y={8} turn={90} />
          <Arrow x={9} y={24} turn={-90} />
          <Arrow x={23} y={24} turn={-90} />
        </Icon>
      </ToolButton>
      <SideSeparator />
      <ToolButton label="页面水平居中" disabled>
        <Icon>
          <path d="M2 3v26M30 3v26" stroke={LINE} strokeWidth="2" />
          <rect x="12.5" y="6.5" width="7" height="19" {...SHAPE} />
          <Arrow x={11} y={16} turn={0} length={7} />
          <Arrow x={21} y={16} turn={180} length={7} />
        </Icon>
      </ToolButton>
      <ToolButton label="页面垂直居中" disabled>
        <Icon>
          <path d="M3 2h26M3 30h26" stroke={LINE} strokeWidth="2" />
          <rect x="6.5" y="12.5" width="19" height="7" {...SHAPE} />
          <Arrow x={16} y={11} turn={90} length={7} />
          <Arrow x={16} y={21} turn={-90} length={7} />
        </Icon>
      </ToolButton>
      <ToolButton label="模板水平居中" disabled>
        <Icon>
          <rect x=".5" y="2.5" width="31" height="27" rx="2" fill="#e1e6f0" stroke="#93a6cf" />
          <rect x="12.5" y="6.5" width="7" height="19" {...SHAPE} />
          <Arrow x={11} y={16} turn={0} length={7} />
          <Arrow x={21} y={16} turn={180} length={7} />
        </Icon>
      </ToolButton>
      <ToolButton label="模板垂直居中" disabled>
        <Icon>
          <rect x=".5" y="2.5" width="31" height="27" rx="2" fill="#e1e6f0" stroke="#93a6cf" />
          <rect x="6.5" y="12.5" width="19" height="7" {...SHAPE} />
          <Arrow x={16} y={11} turn={90} length={7} />
          <Arrow x={16} y={21} turn={-90} length={7} />
        </Icon>
      </ToolButton>
      <SideSeparator />
      <ToolButton label="横向分布" disabled>
        <Icon>
          <rect x=".5" y="9.5" width="7" height="13" {...SHAPE} />
          <rect x="24.5" y="9.5" width="7" height="13" {...SHAPE} />
          <Arrow x={9} y={16} turn={180} />
          <Arrow x={23} y={16} turn={0} />
        </Icon>
      </ToolButton>
      <ToolButton label="纵向分布" disabled>
        <Icon>
          <rect x="9.5" y=".5" width="13" height="7" {...SHAPE} />
          <rect x="9.5" y="24.5" width="13" height="7" {...SHAPE} />
          <Arrow x={16} y={9} turn={-90} />
          <Arrow x={16} y={23} turn={90} />
        </Icon>
      </ToolButton>
      <SideSeparator />
      <ToolButton label="向左旋转 90°" disabled>
        <RotateIcon text="90°" kind="left" />
      </ToolButton>
      <ToolButton label="旋转 180°" disabled>
        <RotateIcon text="180°" kind="both" />
      </ToolButton>
      <ToolButton label="向右旋转 90°" disabled>
        <RotateIcon text="90°" kind="right" />
      </ToolButton>
      <ToolButton label="向左旋转 1°" disabled>
        <RotateIcon text="1°" kind="left" />
      </ToolButton>
      <ToolButton label="向右旋转 1°" disabled>
        <RotateIcon text="1°" kind="right" />
      </ToolButton>
      <button
        type="button"
        aria-label="排列工具栏选项"
        className="mt-[2px] flex h-[11px] items-center justify-end bg-linear-to-r from-[#75a6f1] to-[#053995] pr-[2px]"
      >
        <svg className="h-2 w-2" viewBox="0 0 8 8">
          <path d="M1 1v5M5 2v6l3-3z" stroke="#fff" fill="#fff" />
          <path d="M4 1v6l3-3z" fill="#000" />
        </svg>
      </button>
    </div>
  </aside>
);

export default function App() {
  return (
    <div className="flex h-screen w-full flex-col overflow-hidden bg-[#b5cef5] font-['Roboto','Noto_Sans_CJK_SC',sans-serif] text-black">
      <SharedGradients />
      <TitleBar />
      <div className="flex min-h-0 flex-1 bg-linear-to-b from-[#a8cdee] via-[#a9c7e6] to-[#5a82b0]">
        <div className="flex min-w-0 flex-1 flex-col border-r border-[#4a5a6c] bg-linear-to-r from-[#9dbdf5] to-[#c5dafa]">
          <nav aria-label="主菜单" className="flex h-7 shrink-0 items-center gap-4 pl-1">
            {menuItems.map((item) => (
              <button key={item} type="button" className="text-[12px] leading-4">
                {item}
              </button>
            ))}
          </nav>
          <div className="flex shrink-0 gap-[3px]">
            <StandardToolbar />
            <ObjectToolbar />
            <ViewToolbar />
          </div>
          <div className="mt-px flex shrink-0 gap-[3px]">
            <TextToolbar />
            <LineToolbar />
          </div>
          <div className="flex min-h-0 flex-1">
            <ComponentPanel />
            <DocumentArea />
            <ArrangeToolbar />
          </div>
        </div>
        <div className="w-[7px] shrink-0 border-r-2 border-[#16202e]" />
      </div>
    </div>
  );
}
